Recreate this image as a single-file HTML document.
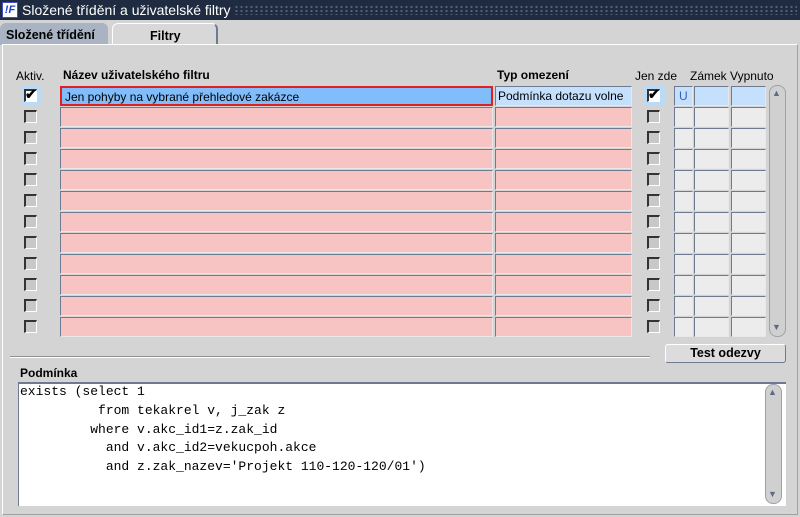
<!DOCTYPE html>
<html><head><meta charset="utf-8"><style>
*{box-sizing:border-box;margin:0;padding:0}
body{width:800px;height:517px;overflow:hidden;background:#d4d4d4;font-family:"Liberation Sans",sans-serif;font-size:12px;position:relative}
.a{position:absolute}
.title{left:0;top:0;width:800px;height:20px;background:#1f2b40;color:#fff;font-size:14px}
.dots{left:234px;top:5px;width:563px;height:10px;background-image:radial-gradient(circle,#56627a 1px,transparent 1.3px);background-size:5px 4px}
.col{position:absolute;top:86px}
.col>div{height:20px;margin-bottom:1px;border:1px solid #6d7a90;border-right-color:#e8e8e8;border-bottom-color:#e8e8e8;}
.pink>div{background:#f7c3c3}
.grey>div{background:#ececec}
.cb{position:absolute;width:13px;height:13px;background:#c8c8c8;border-left:2px solid #333;border-top:2px solid #333;border-right:1px solid #fff;border-bottom:1px solid #fff}
.lbl{font-size:12px;color:#000}
.b{font-weight:bold}
pre{font-family:"Liberation Mono",monospace;font-size:13px;line-height:18.8px}
.sb{background:#d0d0d0;border:1px solid #9aa2b0;border-radius:8px}
</style></head><body>
<div class="a title"><div class="a" style="left:2px;top:2px;width:16px;height:16px;background:#fff;border:1px solid #4050c0;color:#2040d0;font-weight:bold;font-style:italic;font-size:11px;line-height:14px;text-align:center">!F</div><div class="a" style="left:22px;top:2px">Složené třídění a uživatelské filtry</div></div>
<div class="a dots"></div>
<div class="a" style="left:0;top:20px;width:800px;height:25px;background:#d4d4d4"></div>
<div class="a b" style="left:0;top:23px;width:108px;height:22px;background:#a9b3c4;border-radius:6px 6px 0 0;padding:5px 0 0 6px;font-size:12.5px">Složené třídění</div>
<div class="a b" style="left:112px;top:23px;width:106px;height:22px;background:#d8d8d8;border:1px solid #fff;border-right:2px solid #6d7a90;border-bottom:none;border-radius:6px 6px 0 0;padding:5px 0 0 37px;font-size:12.5px">Filtry</div>
<div class="a" style="left:2px;top:44px;width:796px;height:471px;border:1px solid #fff;border-right-color:#a0a0a0;border-bottom-color:#a0a0a0"></div>
<div class="a lbl" style="left:16px;top:69px">Aktiv.</div>
<div class="a lbl b" style="left:63px;top:68px">Název uživatelského filtru</div>
<div class="a lbl b" style="left:497px;top:68px">Typ omezení</div>
<div class="a lbl" style="left:635px;top:69px">Jen zde</div>
<div class="a lbl" style="left:690px;top:69px">Zámek Vypnuto</div>

<div class="a" style="left:21px;top:86px;width:20px;height:20px;background:#bcd9f6"></div>
<div class="a" style="left:643px;top:86px;width:22px;height:20px;background:#bcd9f6"></div>

<div class="col pink" style="left:60px;width:433px"><div style="background:#80bdfa;border:2px solid #e02020;padding:2px 3px">Jen pohyby na vybrané přehledové zakázce</div><div></div><div></div><div></div><div></div><div></div><div></div><div></div><div></div><div></div><div></div><div></div></div>
<div class="col pink" style="left:495px;width:137px"><div style="background:#c4e0fc;padding:2px 2px">Podmínka dotazu volne</div><div></div><div></div><div></div><div></div><div></div><div></div><div></div><div></div><div></div><div></div><div></div></div>
<div class="col grey" style="left:674px;width:19px"><div style="background:#c4e0fc;color:#3060c0;padding:2px 4px">U</div><div></div><div></div><div></div><div></div><div></div><div></div><div></div><div></div><div></div><div></div><div></div></div>
<div class="col grey" style="left:694px;width:35px"><div style="background:#c4e0fc"></div><div></div><div></div><div></div><div></div><div></div><div></div><div></div><div></div><div></div><div></div><div></div></div>
<div class="col grey" style="left:731px;width:35px"><div style="background:#c4e0fc"></div><div></div><div></div><div></div><div></div><div></div><div></div><div></div><div></div><div></div><div></div><div></div></div>

<div class="cb" style="left:24px;top:89px;background:#fff"></div><div class="a b" style="left:25px;top:86px;font-size:14px">✔</div>
<div class="cb" style="left:647px;top:89px;background:#fff"></div><div class="a b" style="left:648px;top:86px;font-size:14px">✔</div>
<div class="cb" style="left:24px;top:110px"></div><div class="cb" style="left:24px;top:131px"></div><div class="cb" style="left:24px;top:152px"></div><div class="cb" style="left:24px;top:173px"></div><div class="cb" style="left:24px;top:194px"></div><div class="cb" style="left:24px;top:215px"></div><div class="cb" style="left:24px;top:236px"></div><div class="cb" style="left:24px;top:257px"></div><div class="cb" style="left:24px;top:278px"></div><div class="cb" style="left:24px;top:299px"></div><div class="cb" style="left:24px;top:320px"></div>
<div class="cb" style="left:647px;top:110px"></div><div class="cb" style="left:647px;top:131px"></div><div class="cb" style="left:647px;top:152px"></div><div class="cb" style="left:647px;top:173px"></div><div class="cb" style="left:647px;top:194px"></div><div class="cb" style="left:647px;top:215px"></div><div class="cb" style="left:647px;top:236px"></div><div class="cb" style="left:647px;top:257px"></div><div class="cb" style="left:647px;top:278px"></div><div class="cb" style="left:647px;top:299px"></div><div class="cb" style="left:647px;top:320px"></div>

<div class="a sb" style="left:769px;top:85px;width:17px;height:252px"></div>
<div class="a" style="left:772px;top:88px;font-size:9px;color:#5a6a88">▲</div>
<div class="a" style="left:772px;top:322px;font-size:9px;color:#5a6a88">▼</div>

<div class="a" style="left:10px;top:356px;width:640px;height:2px;border-top:1px solid #909090;border-bottom:1px solid #fff"></div>
<div class="a b" style="left:665px;top:344px;width:121px;height:19px;background:#dcdcdc;border:1px solid #fff;border-right-color:#6d7a90;border-bottom-color:#6d7a90;border-radius:3px;text-align:center;line-height:17px;font-size:12.5px">Test odezvy</div>

<div class="a lbl b" style="left:20px;top:366px">Podmínka</div>
<div class="a" style="left:18px;top:382px;width:768px;height:124px;background:#fff;border-top:2px solid #6d7a90;border-left:1px solid #6d7a90"></div>
<pre class="a" style="left:20px;top:383px">exists (select 1
          from tekakrel v, j_zak z
         where v.akc_id1=z.zak_id
           and v.akc_id2=vekucpoh.akce
           and z.zak_nazev='Projekt 110-120-120/01')</pre>
<div class="a sb" style="left:765px;top:384px;width:17px;height:120px"></div>
<div class="a" style="left:768px;top:387px;font-size:9px;color:#5a6a88">▲</div>
<div class="a" style="left:768px;top:489px;font-size:9px;color:#5a6a88">▼</div>
</body></html>
